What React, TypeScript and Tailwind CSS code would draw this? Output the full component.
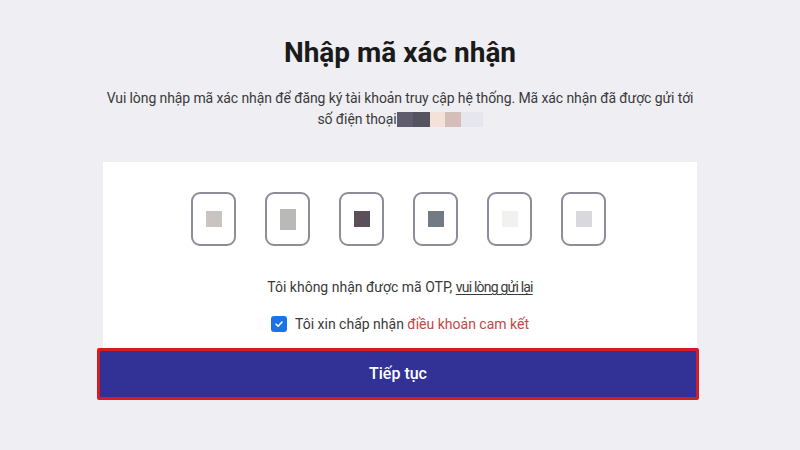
export default function App() {
  const cells = [
    { c: 'bg-[#c9c3c1]', h: 'h-[16px]' },
    { c: 'bg-[#b9b9b7]', h: 'h-[21px]' },
    { c: 'bg-[#5b4f59]', h: 'h-[16px]' },
    { c: 'bg-[#727a86]', h: 'h-[16px]' },
    { c: 'bg-[#f1f1f0]', h: 'h-[16px]' },
    { c: 'bg-[#d9d9dd]', h: 'h-[16px]' },
  ];

  return (
    <div className="min-h-[450px] w-full bg-[#eeeef3] font-['Roboto',sans-serif] text-[#2b2b2b] flex flex-col items-center pt-[36px]">
      <h1 className="text-[28px] font-bold leading-[34px] text-[#1a1a1a]">Nhập mã xác nhận</h1>
      <p className="mt-[18px] w-[620px] text-center text-[14px] leading-[20px] tracking-[-0.1px] text-[#3a3a3a]">
        Vui lòng nhập mã xác nhận để đăng ký tài khoản truy cập hệ thống. Mã xác nhận đã được gửi tới
        <br />
        <span className="inline-flex items-center align-middle">
          số điện thoại
          <span className="inline-flex h-[15px]">
            <span className="w-[16px] bg-[#5f5d6d]" />
            <span className="w-[17px] bg-[#55535f]" />
            <span className="w-[15px] bg-[#f3e1da]" />
            <span className="w-[16px] bg-[#d3bfb8]" />
            <span className="w-[22px] bg-[#e6e6ef]" />
          </span>
        </span>
      </p>

      <div className="mt-[33px] w-[594px] bg-white flex flex-col items-center pt-[30px] pb-[14px]">
        <div className="flex gap-[29px] mr-[3px]">
          {cells.map((cell, i) => (
            <div
              key={i}
              className="w-[45px] h-[54px] rounded-[9px] border-2 border-[#8d8d99] flex items-center justify-center"
            >
              <span className={`w-[16px] ${cell.h} ${cell.c}`} />
            </div>
          ))}
        </div>
        <p className="mt-[31px] text-[14px] leading-[20px] text-[#3a3a3a]">
          Tôi không nhận được mã OTP,{' '}
          <span className="underline underline-offset-2 tracking-[-0.8px]">vui lòng gửi lại</span>
        </p>
        <label className="mt-[17px] flex items-center gap-[8px] text-[14px] leading-[20px] text-[#3a3a3a]">
          <span className="w-[16px] h-[16px] rounded-[3px] bg-[#1a73e8] flex items-center justify-center">
            <svg width="10" height="10" viewBox="0 0 10 10" fill="none">
              <path d="M2 5.2 L4.1 7.2 L8 3" stroke="white" strokeWidth="1.6" strokeLinecap="round" strokeLinejoin="round" />
            </svg>
          </span>
          <span>
            Tôi xin chấp nhận <span className="text-[#c94447]">điều khoản cam kết</span>
          </span>
        </label>
      </div>

      <button className="mr-[4px] w-[602px] h-[52px] border-[3px] border-[#d31d25] rounded-[2px] bg-[#323296] text-white text-[16px] font-medium">
        Tiếp tục
      </button>
    </div>
  );
}
